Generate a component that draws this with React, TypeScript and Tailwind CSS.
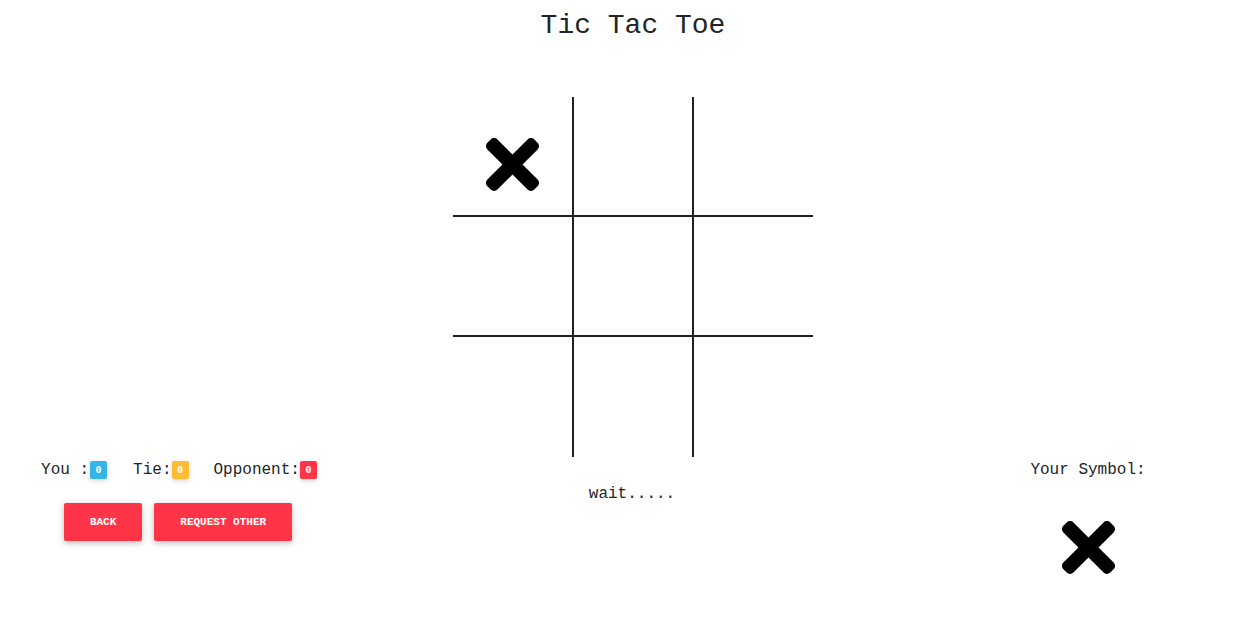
const mono = { fontFamily: '"Liberation Mono", "DejaVu Sans Mono", monospace' };

function Cross({ size = 54 }: { size?: number }) {
  return (
    <svg width={size} height={size} viewBox="0 80 352 352" fill="#000">
      <path d="M242.72 256l100.07-100.07c12.28-12.28 12.28-32.19 0-44.48l-22.24-22.24c-12.28-12.28-32.19-12.28-44.48 0L176 189.28 75.93 89.21c-12.28-12.28-32.19-12.28-44.48 0L9.21 111.45c-12.28 12.28-12.28 32.19 0 44.48L109.28 256 9.21 356.07c-12.28 12.28-12.28 32.19 0 44.48l22.24 22.24c12.28 12.28 32.2 12.28 44.48 0L176 322.72l100.07 100.07c12.28 12.28 32.2 12.28 44.48 0l22.24-22.24c12.28-12.28 12.28-32.19 0-44.48L242.72 256z" />
    </svg>
  );
}

const cells = ['X', '', '', '', '', '', '', '', ''];

export default function App() {
  return (
    <div className="w-[1253px] min-h-[632px] bg-white text-[#212529]" style={mono}>
      {/* Title */}
      <div className="pt-[9px] pl-[13px] text-center text-[28px] leading-[34px]">Tic Tac Toe</div>

      {/* Board */}
      <div className="mt-[54px] pl-[13px] flex justify-center">
        <div className="grid grid-cols-[121px_120px_119px] grid-rows-[120px_120px_120px] w-[360px]">
          {cells.map((c, i) => (
            <div
              key={i}
              className={
                'flex items-center justify-center pt-[17px] ' +
                (i % 3 !== 2 ? 'border-r-2 border-[#222] ' : '') +
                (i < 6 ? 'border-b-2 border-[#222]' : '')
              }
            >
              {c === 'X' && <Cross size={53} />}
            </div>
          ))}
        </div>
      </div>

      {/* Bottom row */}
      <div className="mt-[1px] grid grid-cols-[356px_1fr_330px]">
        {/* Scores + buttons */}
        <div className="flex flex-col items-center">
          <div className="flex items-center h-[24px] text-[16px] pl-[2px]">
            <span>You :</span>
            <span className="ml-[1px] inline-flex items-center justify-center w-[17px] h-[18px] rounded-[2px] bg-[#33b5e5] text-white text-[10px] font-bold shadow-[0_2px_5px_0_rgba(0,0,0,0.16)]">0</span>
            <span className="ml-[26px]">Tie:</span>
            <span className="inline-flex items-center justify-center w-[17px] h-[18px] rounded-[2px] bg-[#ffbb33] text-white text-[10px] font-bold shadow-[0_2px_5px_0_rgba(0,0,0,0.16)]">0</span>
            <span className="ml-[25px]">Opponent:</span>
            <span className="inline-flex items-center justify-center w-[17px] h-[18px] rounded-[2px] bg-[#ff3547] text-white text-[10px] font-bold shadow-[0_2px_5px_0_rgba(0,0,0,0.16)]">0</span>
          </div>
          <div className="mt-[21px] flex gap-[12px]">
            <button className="h-[38px] px-[26px] rounded-[2px] bg-[#ff3547] text-white text-[11px] font-bold uppercase shadow-[0_2px_5px_0_rgba(0,0,0,0.16),0_2px_10px_0_rgba(0,0,0,0.12)]">
              Back
            </button>
            <button className="h-[38px] px-[26px] rounded-[2px] bg-[#ff3547] text-white text-[11px] font-bold uppercase shadow-[0_2px_5px_0_rgba(0,0,0,0.16),0_2px_10px_0_rgba(0,0,0,0.12)]">
              Request Other
            </button>
          </div>
        </div>

        {/* Status */}
        <div className="pr-[15px] pt-[24px] text-center text-[16px] leading-[24px]">wait.....</div>

        {/* Your symbol */}
        <div className="flex flex-col items-center">
          <div className="h-[24px] leading-[24px] text-[16px]">Your Symbol:</div>
          <div className="mt-[39px]">
            <Cross size={53} />
          </div>
        </div>
      </div>
    </div>
  );
}
